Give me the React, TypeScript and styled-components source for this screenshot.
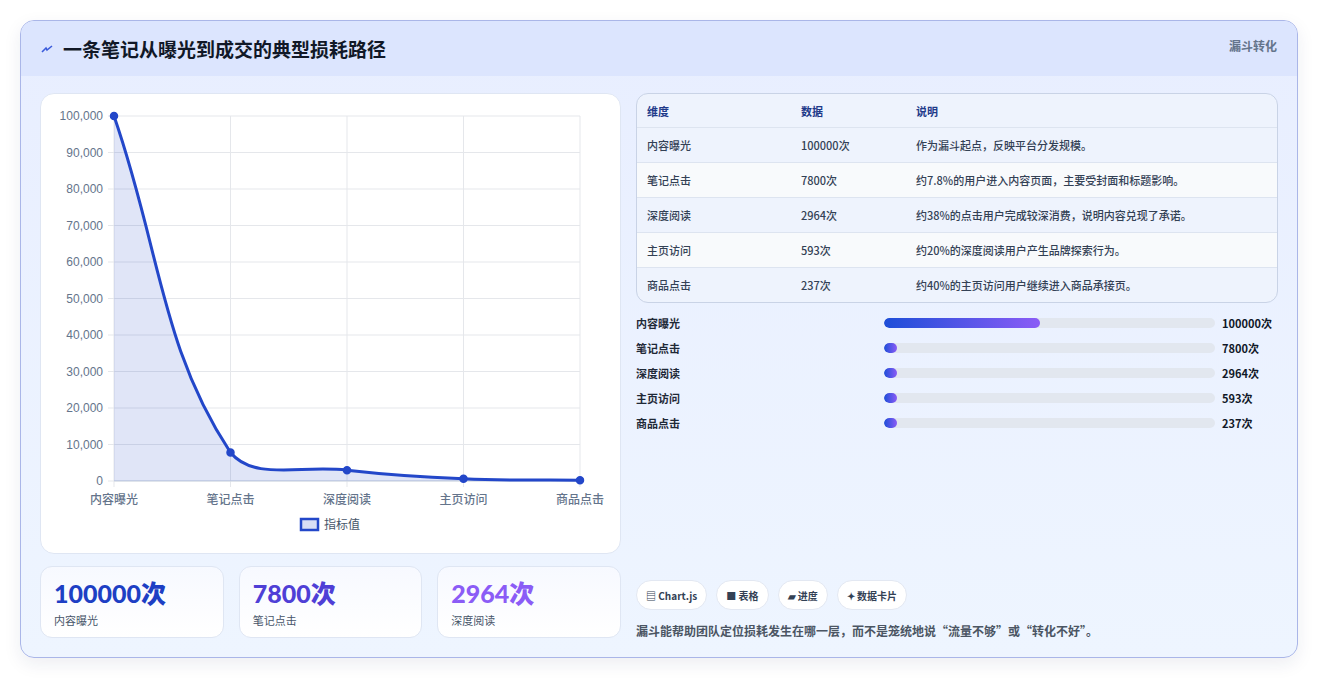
import React from 'react';
import styled, { createGlobalStyle } from 'styled-components';

const Global = createGlobalStyle`
  body { margin: 0; background: #f3f4f6; font-family: "Noto Sans CJK SC", "Noto Sans", sans-serif; }
`;

const steps = [
  { name: '内容曝光', value: 100000, note: '作为漏斗起点，反映平台分发规模。' },
  { name: '笔记点击', value: 7800, note: '约7.8%的用户进入内容页面，主要受封面和标题影响。' },
  { name: '深度阅读', value: 2964, note: '约38%的点击用户完成较深消费，说明内容兑现了承诺。' },
  { name: '主页访问', value: 593, note: '约20%的深度阅读用户产生品牌探索行为。' },
  { name: '商品点击', value: 237, note: '约40%的主页访问用户继续进入商品承接页。' },
];

// ── Layout ──────────────────────────────────────────────────────────────────

const Page = styled.div`
  width: 1318px;
  height: 679px;
  padding: 20px;
  box-sizing: border-box;
  background: #fff;
`;

const Card = styled.div`
  height: 638px;
  box-sizing: border-box;
  border: 1px solid #aab6e8;
  border-radius: 14px;
  overflow: hidden;
  background: linear-gradient(180deg, #e8eeff 0%, #eef5ff 100%);
  box-shadow: 0 6px 18px rgba(30, 40, 90, 0.08);
  display: flex;
  flex-direction: column;
`;

const Header = styled.div`
  height: 55px;
  flex-shrink: 0;
  background: #dce5fe;
  display: flex;
  align-items: center;
  justify-content: space-between;
  padding: 0 20px;
  position: relative;
`;

const Title = styled.h1`
  margin: 0;
  font-size: 19px;
  font-weight: 700;
  color: #111827;
  display: flex;
  align-items: center;
  gap: 10px;
`;

const Tag = styled.span`
  position: absolute;
  top: 16px;
  right: 20px;
  font-size: 12px;
  font-weight: 700;
  color: #64748b;
`;

const Body = styled.div`
  flex: 1;
  display: grid;
  grid-template-columns: 581px 1fr;
  gap: 15px;
  padding: 17px 19px 18px 19px;
`;

const Col = styled.div`
  display: flex;
  flex-direction: column;
`;

const ChartCard = styled.div`
  height: 461px;
  background: #fff;
  border: 1px solid #dfe6f3;
  border-radius: 14px;
  box-sizing: border-box;
`;

const Stats = styled.div`
  margin-top: 12px;
  display: grid;
  grid-template-columns: repeat(3, 1fr);
  gap: 15px;
`;

const Stat = styled.div`
  height: 72px;
  box-sizing: border-box;
  border: 1px solid #dfe6f3;
  border-radius: 12px;
  background: linear-gradient(180deg, #f7f9ff, #fff);
  padding: 10px 13px;
`;

const StatValue = styled.div<{ $c: string }>`
  font-family: "Lato", "Noto Sans CJK SC", sans-serif;
  font-size: 25px;
  font-weight: 900;
  line-height: 32px;
  color: ${p => p.$c};
`;

const StatLabel = styled.div`
  font-size: 11px;
  color: #475569;
  margin-top: 3px;
`;

const Table = styled.div`
  border: 1px solid #c9d3e6;
  border-radius: 12px;
  overflow: hidden;
  background: #eef3fd;
`;

const Row = styled.div<{ $alt?: boolean; $head?: boolean }>`
  display: grid;
  grid-template-columns: 154px 115px 1fr;
  padding: 0 10px;
  align-items: center;
  height: ${p => (p.$head ? 33 : 35)}px;
  font-size: 11px;
  font-weight: ${p => (p.$head ? 700 : 500)};
  color: ${p => (p.$head ? '#1e3a8a' : '#334155')};
  background: ${p => (p.$alt ? '#f8fafc' : 'transparent')};
  border-top: ${p => (p.$head ? 'none' : '1px solid #dde4f0')};
  box-sizing: border-box;
`;

const Bars = styled.div`
  margin-top: 12px;
  display: flex;
  flex-direction: column;
  gap: 10px;
`;

const BarRow = styled.div`
  display: grid;
  grid-template-columns: 239px 331px 1fr;
  gap: 9px;
  align-items: center;
  font-size: 11px;
  font-weight: 600;
  color: #1f2937;
  height: 15px;
`;

const Track = styled.div`
  height: 10px;
  border-radius: 999px;
  background: #e2e7ef;
  overflow: hidden;
`;

const Fill = styled.div`
  height: 100%;
  border-radius: 999px;
  background: linear-gradient(90deg, #1d4ed8, #8b5cf6);
`;

const BarValue = styled.span`
  font-weight: 700;
  color: #111827;
  margin-left: -2px;
`;

const Chips = styled.div`
  margin-top: auto;
  display: flex;
  gap: 9px;
`;

const Chip = styled.span`
  height: 28px;
  padding: 0 9px;
  border-radius: 999px;
  background: #fff;
  border: 1px solid #e3e8f2;
  display: inline-flex;
  align-items: center;
  gap: 3px;
  font-size: 10px;
  font-weight: 700;
  color: #334155;
`;

const Foot = styled.p`
  margin: 12px 0 0;
  font-size: 12px;
  font-weight: 600;
  color: #4b5563;
`;

// ── Chart ───────────────────────────────────────────────────────────────────

const X0 = 73, X1 = 539, Y0 = 22, Y1 = 387;
const px = (i: number) => X0 + ((X1 - X0) * i) / 4;
const py = (v: number) => Y1 - ((Y1 - Y0) * v) / 100000;

function curvePath() {
  const pts = steps.map((s, i) => [px(i), py(s.value)]);
  const cps = pts.map((p, i) => {
    const a = pts[Math.max(0, i - 1)], b = pts[Math.min(pts.length - 1, i + 1)];
    const d01 = Math.hypot(p[0] - a[0], p[1] - a[1]);
    const d12 = Math.hypot(b[0] - p[0], b[1] - p[1]);
    const s = d01 + d12 || 1;
    const fa = (0.4 * d01) / s, fb = (0.4 * d12) / s;
    return {
      prev: [p[0] - fa * (b[0] - a[0]), Math.min(Y1, p[1] - fa * (b[1] - a[1]))],
      next: [p[0] + fb * (b[0] - a[0]), Math.min(Y1, p[1] + fb * (b[1] - a[1]))],
    };
  });
  let d = `M${pts[0][0]},${pts[0][1]}`;
  for (let i = 1; i < pts.length; i++) {
    d += ` C${cps[i - 1].next[0]},${cps[i - 1].next[1]} ${cps[i].prev[0]},${cps[i].prev[1]} ${pts[i][0]},${pts[i][1]}`;
  }
  return d;
}

const Chart = () => {
  const d = curvePath();
  const ticks = Array.from({ length: 11 }, (_, i) => i * 10000);
  return (
    <svg width="579" height="459" style={{ display: 'block' }}>
      {ticks.map(t => (
        <g key={t}>
          <line x1={X0 - 6} x2={X1} y1={py(t)} y2={py(t)} stroke="#e5e7eb" />
          <text x={X0 - 11} y={py(t) + 4} textAnchor="end" fontSize="12" fill="#64748b" fontFamily="Liberation Sans, sans-serif">
            {t.toLocaleString('en-US')}
          </text>
        </g>
      ))}
      {steps.map((s, i) => (
        <g key={s.name}>
          <line x1={px(i)} x2={px(i)} y1={Y0} y2={Y1 + 6} stroke="#e5e7eb" />
          <text x={px(i)} y={Y1 + 23} textAnchor="middle" fontSize="12" fill="#64748b" fontWeight="500">{s.name}</text>
        </g>
      ))}
      <line x1={X0} x2={X1} y1={Y1} y2={Y1} stroke="#cbd5e1" />
      <path d={`${d} L${X1},${Y1} L${X0},${Y1} Z`} fill="rgba(37,71,201,0.14)" />
      <path d={d} fill="none" stroke="#2347c9" strokeWidth="3" />
      {steps.map((s, i) => (
        <circle key={s.name} cx={px(i)} cy={py(s.value)} r="3.5" fill="#2347c9" stroke="#2347c9" strokeWidth="1.5" />
      ))}
      <rect x="260" y="425" width="17" height="11" fill="rgba(37,71,201,0.18)" stroke="#2347c9" strokeWidth="2.5" />
      <text x="283" y="435" fontSize="12" fill="#475569">指标值</text>
    </svg>
  );
};

export default function App() {
  const max = 100000;
  return (
    <Page>
      <Global />
      <Card>
        <Header>
          <Title>
            <svg width="12" height="10" viewBox="0 0 12 10">
              <path d="M1 8 L5 4 L6 6 L11 2" stroke="#3b5bdb" strokeWidth="1.6" fill="none" />
            </svg>
            一条笔记从曝光到成交的典型损耗路径
          </Title>
          <Tag>漏斗转化</Tag>
        </Header>
        <Body>
          <Col>
            <ChartCard><Chart /></ChartCard>
            <Stats>
              <Stat><StatValue $c="#1d3fc4">100000次</StatValue><StatLabel>内容曝光</StatLabel></Stat>
              <Stat><StatValue $c="#4f3fd6">7800次</StatValue><StatLabel>笔记点击</StatLabel></Stat>
              <Stat><StatValue $c="#8b5cf6">2964次</StatValue><StatLabel>深度阅读</StatLabel></Stat>
            </Stats>
          </Col>
          <Col>
            <Table>
              <Row $head><span>维度</span><span>数据</span><span>说明</span></Row>
              {steps.map((s, i) => (
                <Row key={s.name} $alt={i % 2 === 1}>
                  <span>{s.name}</span><span>{s.value}次</span><span>{s.note}</span>
                </Row>
              ))}
            </Table>
            <Bars>
              {steps.map(s => (
                <BarRow key={s.name}>
                  <span>{s.name}</span>
                  <Track><Fill style={{ width: `${Math.max(4, (s.value / max) * 47)}%` }} /></Track>
                  <BarValue>{s.value}次</BarValue>
                </BarRow>
              ))}
            </Bars>
            <Chips>
              <Chip>▤ Chart.js</Chip>
              <Chip>■ 表格</Chip>
              <Chip>▰ 进度</Chip>
              <Chip>✦ 数据卡片</Chip>
            </Chips>
            <Foot>漏斗能帮助团队定位损耗发生在哪一层，而不是笼统地说“流量不够”或“转化不好”。</Foot>
          </Col>
        </Body>
      </Card>
    </Page>
  );
}
